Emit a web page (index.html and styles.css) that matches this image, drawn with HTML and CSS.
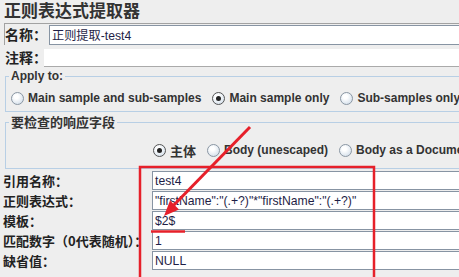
FILE: index.html
```html
<!DOCTYPE html>
<html lang="zh">
<head>
  <meta charset="UTF-8" />
  <title>正则表达式提取器</title>
  <link rel="stylesheet" href="styles.css">
</head>
<body>

  <div class="title">正则表达式提取器</div>

  <div class="name-row">
    <span class="top-label name-label">名称：</span>
    <div class="field name-field">正则提取-test4</div>
  </div>

  <div class="comment-row">
    <span class="top-label comment-label">注释：</span>
    <div class="comment-field"></div>
  </div>

  <fieldset class="group apply">
    <legend>Apply to:</legend>
    <div class="radio-row apply-row">
      <label class="radio"><span class="dot"></span>Main sample and sub-samples</label>
      <label class="radio"><span class="dot checked"></span>Main sample only</label>
      <label class="radio"><span class="dot"></span>Sub-samples only</label>
    </div>
  </fieldset>

  <fieldset class="group check">
    <legend class="cn-legend">要检查的响应字段</legend>
    <div class="radio-row check-row">
      <label class="radio cn"><span class="dot checked"></span>主体</label>
      <label class="radio"><span class="dot"></span>Body (unescaped)</label>
      <label class="radio"><span class="dot"></span>Body as a Document</label>
    </div>
  </fieldset>

  <div class="form">
    <div class="form-row">
      <span class="form-label">引用名称：</span>
      <div class="field">test4</div>
    </div>
    <div class="form-row">
      <span class="form-label">正则表达式：</span>
      <div class="field">"firstName":"(.+?)"*"firstName":"(.+?)"</div>
    </div>
    <div class="form-row">
      <span class="form-label">模板：</span>
      <div class="field">$2$</div>
    </div>
    <div class="form-row">
      <span class="form-label">匹配数字（0代表随机）：</span>
      <div class="field">1</div>
    </div>
    <div class="form-row">
      <span class="form-label">缺省值：</span>
      <div class="field">NULL</div>
    </div>
  </div>

  <!-- red markup drawn over the screenshot -->
  <svg class="markup" width="459" height="277" viewBox="0 0 459 277">
    <rect x="140" y="167" width="234" height="200" fill="none" stroke="#e6202a" stroke-width="2.5" />
    <line x1="250" y1="127" x2="172" y2="207" stroke="#e6202a" stroke-width="3" />
    <polygon points="164,216 179,209.5 170,200.5" fill="#e6202a" />
    <line x1="151" y1="231.5" x2="185" y2="231.5" stroke="#e6202a" stroke-width="2.5" />
  </svg>

</body>
</html>
```

FILE: styles.css
```css
body {
  margin: 0;
  width: 459px;
  height: 277px;
  overflow: hidden;
  position: relative;
  background: #eeeeee;
  font-family: "Liberation Sans", Arial, "Noto Sans CJK SC", sans-serif;
  color: #333;
}

.title {
  height: 22px;
  line-height: 20px;
  padding-left: 4px;
  box-sizing: border-box;
  font-family: "Noto Sans CJK SC", sans-serif;
  font-size: 17px;
  font-weight: bold;
  color: #333;
}

.top-label {
  font-family: "Noto Sans CJK SC", sans-serif;
  font-size: 14px;
  font-weight: bold;
  color: #222;
  white-space: nowrap;
  overflow: visible;
}

.name-row {
  display: flex;
  align-items: stretch;
  height: 20px;
  margin-top: 1px;
  margin-left: 4px;
  padding-top: 1px;
  border-top: 1px solid #a2a2a2;
  border-left: 1px solid #a2a2a2;
}

.name-label {
  width: 44px;
  line-height: 19px;
}

.name-field {
  flex: 1;
  font-size: 12.5px;
}

.comment-row {
  display: flex;
  height: 20px;
  margin-top: 2px;
  margin-left: 5px;
}

.comment-label {
  width: 39px;
  line-height: 20px;
}

.comment-field {
  flex: 1;
  margin-top: 2px;
  background: #fff;
  border-bottom: 1px solid #aaaaaa;
}

.field {
  display: flex;
  align-items: center;
  padding-left: 2px;
  background: #fff;
  border: 1px solid #8794a3;
  border-right: none;
  color: #1e1e46;
  font-size: 12.2px;
  white-space: nowrap;
  overflow: hidden;
}

/* groups */
.group {
  margin: 0 0 0 5px;
  width: 500px;
  border: 1px solid #b8cfe5;
  border-right: none;
  padding: 0;
  min-width: 0;
}

.group legend {
  margin-left: 3px;
  padding: 0 2px;
  font-size: 12px;
  font-weight: bold;
  line-height: 14px;
  color: #333;
}

.group .cn-legend {
  font-family: "Noto Sans CJK SC", sans-serif;
  font-size: 13px;
}

.apply {
  margin-top: 2px;
  padding-top: 7px;
  padding-bottom: 5px;
}

.check {
  margin-top: 3px;
  padding-top: 13px;
  padding-bottom: 10px;
}

.radio-row {
  display: flex;
  align-items: center;
  gap: 11px;
  height: 16px;
  white-space: nowrap;
}

.apply-row {
  margin-left: 5px;
}

.check-row {
  margin-left: 147px;
}

.radio {
  display: flex;
  align-items: center;
  gap: 4px;
  font-size: 12px;
  font-weight: bold;
  color: #333;
}

.radio.cn {
  font-family: "Noto Sans CJK SC", sans-serif;
  font-size: 13px;
}

.dot {
  width: 11px;
  height: 11px;
  border: 1px solid #8a96a3;
  border-radius: 50%;
  background: radial-gradient(circle at 40% 35%, #ffffff 20%, #dde6ef 70%, #c3d1de 100%);
  position: relative;
}

.dot.checked {
  border-color: #555;
}

.dot.checked::after {
  content: "";
  position: absolute;
  top: 3px;
  left: 3px;
  width: 5px;
  height: 5px;
  border-radius: 50%;
  background: #222;
}

/* form rows */
.form {
  margin-top: 2px;
  display: flex;
  flex-direction: column;
  gap: 1px;
}

.form-row {
  display: flex;
  height: 19px;
}

.form-label {
  width: 149px;
  padding-left: 3px;
  line-height: 19px;
  font-family: "Noto Sans CJK SC", sans-serif;
  font-size: 13px;
  font-weight: bold;
  color: #222;
  white-space: nowrap;
}

.form-row .field {
  flex: 1;
}

.markup {
  position: absolute;
  top: 0;
  left: 0;
  pointer-events: none;
}
```
